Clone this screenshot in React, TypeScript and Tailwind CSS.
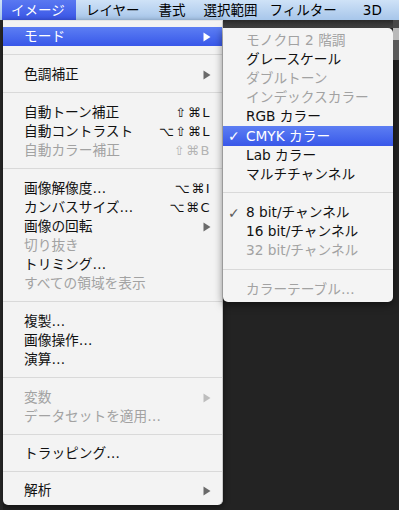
import React from "react";

type Item =
  | { sep: true; h?: string }
  | {
      label: string;
      sc?: string;
      arrow?: boolean;
      disabled?: boolean;
      active?: boolean;
      check?: boolean;
    };

const mainItems: Item[] = [
  { label: "モード", arrow: true, active: true },
  { sep: true },
  { label: "色調補正", arrow: true },
  { sep: true },
  { label: "自動トーン補正", sc: "⇧⌘L" },
  { label: "自動コントラスト", sc: "⌥⇧⌘L" },
  { label: "自動カラー補正", sc: "⇧⌘B", disabled: true },
  { sep: true },
  { label: "画像解像度…", sc: "⌥⌘I" },
  { label: "カンバスサイズ…", sc: "⌥⌘C" },
  { label: "画像の回転", arrow: true },
  { label: "切り抜き", disabled: true },
  { label: "トリミング…" },
  { label: "すべての領域を表示", disabled: true },
  { sep: true },
  { label: "複製…" },
  { label: "画像操作…" },
  { label: "演算…" },
  { sep: true },
  { label: "変数", arrow: true, disabled: true },
  { label: "データセットを適用…", disabled: true },
  { sep: true, h: "short" },
  { label: "トラッピング…" },
  { sep: true, h: "short" },
  { label: "解析", arrow: true },
];

const subItems: Item[] = [
  { label: "モノクロ 2 階調", disabled: true },
  { label: "グレースケール" },
  { label: "ダブルトーン", disabled: true },
  { label: "インデックスカラー", disabled: true },
  { label: "RGB カラー" },
  { label: "CMYK カラー", active: true, check: true },
  { label: "Lab カラー" },
  { label: "マルチチャンネル" },
  { sep: true },
  { label: "8 bit/チャンネル", check: true },
  { label: "16 bit/チャンネル" },
  { label: "32 bit/チャンネル", disabled: true },
  { sep: true },
  { label: "カラーテーブル…", disabled: true },
];

const font = "font-['DejaVu_Sans','Noto_Sans_CJK_JP',sans-serif]";

const Arrow = ({ color }: { color: string }) => (
  <svg width="8" height="10" viewBox="0 0 8 10" className="shrink-0">
    <polygon points="0.5,0.5 7.5,5 0.5,9.5" fill={color} />
  </svg>
);

const Separator = ({ short }: { short?: boolean }) => (
  <div className={short ? "h-[18px] pt-[8px]" : "h-[19px] pt-[8px]"}>
    <div className="h-px bg-[#d9d9d9]" />
  </div>
);

const MainRow = ({ item }: { item: Extract<Item, { label: string }> }) => {
  const text = item.active ? "text-white" : item.disabled ? "text-[#a2a2a2]" : "text-[#111]";
  const bg = item.active ? "bg-gradient-to-b from-[#5d7ef3] to-[#3957e9]" : "";
  return (
    <div className={`h-[19px] flex items-center pl-[21px] pr-[11px] ${bg} ${text}`}>
      <span className="flex-1 text-[13.7px] leading-[19px] whitespace-nowrap">{item.label}</span>
      {item.sc && (
        <span
          className={`text-[13px] tracking-[1.5px] leading-[19px] ${
            item.disabled ? "text-[#b3b3b3]" : "text-[#111]"
          }`}
        >
          {item.sc}
        </span>
      )}
      {item.arrow && (
        <Arrow color={item.active ? "#ffffff" : item.disabled ? "#bdbdbd" : "#6a6a6a"} />
      )}
    </div>
  );
};

const SubRow = ({ item }: { item: Extract<Item, { label: string }> }) => {
  const text = item.active ? "text-white" : item.disabled ? "text-[#a2a2a2]" : "text-[#111]";
  const bg = item.active ? "bg-gradient-to-b from-[#5d7ef3] to-[#3957e9]" : "";
  return (
    <div className={`h-[19.2px] flex items-center ${bg} ${text}`}>
      <span
        className={`w-[23px] pl-[5px] text-[14px] font-bold leading-none ${
          item.active ? "text-white" : "text-[#5c5c5c]"
        }`}
      >
        {item.check ? "✓" : ""}
      </span>
      <span className="text-[13.7px] leading-[19px] whitespace-nowrap">{item.label}</span>
    </div>
  );
};

export default function App() {
  const bar = [
    { t: "レイヤー", w: "pl-[10px]" },
    { t: "書式", w: "pl-[19px]" },
    { t: "選択範囲", w: "pl-[18px]" },
    { t: "フィルター", w: "pl-[12px]" },
    { t: "3D", w: "pl-[26px]" },
  ];
  return (
    <div className={`w-[399px] h-[510px] bg-[#232323] flex flex-col overflow-hidden ${font}`}>
      {/* menu bar */}
      <div className="h-[20px] shrink-0 flex items-stretch bg-gradient-to-b from-[#cfe2f7] to-[#a7c6ea]">
        <div className="ml-[2px] w-[74px] pl-[9px] flex items-center bg-gradient-to-b from-[#5a78f1] to-[#3a55e6] text-white text-[13.5px]">
          イメージ
        </div>
        {bar.map((b) => (
          <div key={b.t} className={`${b.w} flex items-center text-[13.5px] text-black`}>
            {b.t}
          </div>
        ))}
      </div>

      <div className="flex flex-1 min-h-0">
        <div className="w-[3px] bg-[#2a2a2a]" />

        {/* main menu */}
        <div className="w-[220px] h-[485px] bg-[#f3f3f3] rounded-b-[5px] pt-[6px] border-t border-[#e6e6e6] border-r border-r-[#c9c9c9] shadow-[0_2px_6px_rgba(0,0,0,0.5)]">
          {mainItems.map((it, i) =>
            "sep" in it ? <Separator key={i} short={it.h === "short"} /> : <MainRow key={i} item={it} />
          )}
        </div>

        {/* submenu column */}
        <div className="flex flex-col w-[170px]">
          <div className="h-[8px] bg-gradient-to-b from-[#2a2a2a] to-[#484848]" />
          <div className="h-[274px] bg-[#f4f4f4] rounded-tr-[5px] rounded-b-[5px] pt-[2.5px] shadow-[0_3px_8px_rgba(0,0,0,0.5)]">
            {subItems.map((it, i) =>
              "sep" in it ? <Separator key={i} /> : <SubRow key={i} item={it} />
            )}
          </div>
        </div>

        <div className="flex-1 flex flex-col">
          <div className="h-[8px] bg-[#484848]" />
          <div className="h-[12px] bg-[#b9b9b9]" />
          <div className="h-[20px] bg-[#5a5a5a]" />
        </div>
      </div>
    </div>
  );
}
